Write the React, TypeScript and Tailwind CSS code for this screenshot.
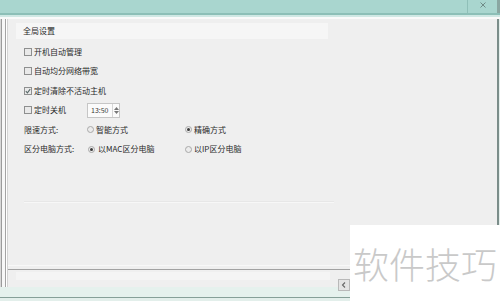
import React from 'react'

const font = { fontFamily: '"Noto Sans CJK SC", "Noto Sans", sans-serif' }

function Check({ checked = false }: { checked?: boolean }) {
  return (
    <span className="flex h-[8px] w-[8px] items-center justify-center border border-[#8e8f8f] bg-[#e9e9e9]">
      {checked && (
        <svg width="6" height="6" viewBox="0 0 6 6">
          <path d="M0.8 3.2 L2.4 4.8 L5.2 1.2" fill="none" stroke="#5a6a6a" strokeWidth="1.1" />
        </svg>
      )}
    </span>
  )
}

function Radio({ checked = false }: { checked?: boolean }) {
  return (
    <span className="flex h-[7px] w-[7px] items-center justify-center rounded-full border border-[#a9a9a9] bg-[#ececec]">
      {checked && <span className="h-[3px] w-[3px] rounded-full bg-[#3b3b3b]" />}
    </span>
  )
}

export default function App() {
  return (
    <div className="relative flex h-[301px] w-[500px] flex-col overflow-hidden bg-[#efefef] text-[8px] leading-none text-[#2a2a2a]" style={font}>
      {/* window top strip */}
      <div className="flex h-[13px] bg-[#a9d6cf]">
        <div className="flex-1" />
        <div className="w-[1px] bg-[#8fbfb8]" />
        <div className="flex w-[29px] items-start justify-center pt-[2px]">
          <svg width="6" height="6" viewBox="0 0 6 6">
            <path d="M0.5 0.5 L5.5 5.5 M5.5 0.5 L0.5 5.5" stroke="#6f8a86" strokeWidth="1" />
          </svg>
        </div>
        <div className="w-[3px] bg-[#8aa7a2]" />
      </div>
      <div className="h-[2px] bg-[#8cbfb7]" />
      <div className="h-[2px] bg-[#cfe8e4]" />
      <div className="h-[2px] bg-[#fafafa]" />

      <div className="flex flex-1">
        {/* left frame lines */}
        <div className="flex w-[8px]">
          <div className="w-[1px] bg-[#d8d8d8]" />
          <div className="w-[1px] bg-[#9b9b9b]" />
          <div className="w-[3px] bg-[#f7f7f7]" />
          <div className="w-[1px] bg-[#a3a3a3]" />
          <div className="w-[1px] bg-[#ffffff]" />
          <div className="w-[1px] bg-[#d4d4d4]" />
        </div>

        <div className="flex flex-1 flex-col">
          <div className="ml-[8px] mt-[4px] flex h-[16px] w-[312px] items-center bg-[#f6f6f6] pl-[7px]">全局设置</div>

          <div className="ml-[16px] pt-[3px]">
            <div className="flex h-[19.5px] items-center gap-[2px]">
              <Check />
              <span>开机自动管理</span>
            </div>
            <div className="flex h-[19.5px] items-center gap-[2px]">
              <Check />
              <span>自动均分网络带宽</span>
            </div>
            <div className="flex h-[19.5px] items-center gap-[2px]">
              <Check checked />
              <span>定时清除不活动主机</span>
            </div>
            <div className="flex h-[19.5px] items-center">
              <div className="flex w-[63px] items-center gap-[2px]">
                <Check />
                <span>定时关机</span>
              </div>
              <div className="flex h-[15px] w-[33px] items-center border border-[#c6c6c6] bg-[#fbfbfb] pl-[3px] text-[7px] text-[#3a3a3a]">
                <span className="flex-1">13:50</span>
                <span className="flex h-full w-[7px] flex-col items-center justify-center gap-[1px] border-l border-[#d6d6d6]">
                  <svg width="5" height="3" viewBox="0 0 5 3"><path d="M0 3 L2.5 0 L5 3Z" fill="#777" /></svg>
                  <svg width="5" height="3" viewBox="0 0 5 3"><path d="M0 0 L2.5 3 L5 0Z" fill="#777" /></svg>
                </span>
              </div>
            </div>
            <div className="flex h-[19.5px] items-center">
              <span className="w-[63px]">限速方式:</span>
              <div className="flex w-[98px] items-center gap-[2px]">
                <Radio />
                <span>智能方式</span>
              </div>
              <div className="flex items-center gap-[2px]">
                <Radio checked />
                <span>精确方式</span>
              </div>
            </div>
            <div className="flex h-[19.5px] items-center">
              <span className="w-[64px]">区分电脑方式:</span>
              <div className="flex w-[97px] items-center gap-[3px]">
                <Radio checked />
                <span>以MAC区分电脑</span>
              </div>
              <div className="flex items-center gap-[2px]">
                <Radio />
                <span>以IP区分电脑</span>
              </div>
            </div>
          </div>

          {/* group box bottom edge */}
          <div className="ml-[16px] mt-[42px] h-[1px] w-[310px] bg-[#e7e7e7]" />
          <div className="ml-[16px] h-[1px] w-[310px] bg-[#f7f7f7]" />

          <div className="mt-auto h-[1px] bg-[#f8f8f8]" />
          <div className="mt-[3px] h-[1px] bg-[#a2a2a2]" />
          <div className="flex h-[17px]">
            <div className="w-[322px] pl-[8px] pt-[2px]">
              <div className="h-[8px] bg-[#f4f4f4]" />
            </div>
            <div className="relative z-10 ml-[8px] mt-[9px] flex h-[12px] w-[12px] items-center justify-center border border-[#b9b9b9] bg-[#e4e4e4]">
              <svg width="6" height="6" viewBox="0 0 6 6"><path d="M4 0.5 L1.5 3 L4 5.5" fill="none" stroke="#666" strokeWidth="1.1" /></svg>
            </div>
          </div>
        </div>

        <div className="flex w-[3px]">
          <div className="w-[2px] bg-[#7b8d8a]" />
          <div className="w-[1px] bg-[#e4efec]" />
        </div>
      </div>

      {/* bottom strip */}
      <div className="h-[10px] bg-[#e5f1ed]" />
      <div className="h-[1px] bg-[#86a098]" />
      <div className="h-[3px] bg-[#e3efeb]" />

      {/* site watermark box */}
      <div className="absolute bottom-0 right-0 flex h-[76px] w-[150px] items-center justify-center bg-white text-[36px] font-light text-[#c9c9c9]">
        软件技巧
      </div>
    </div>
  )
}
